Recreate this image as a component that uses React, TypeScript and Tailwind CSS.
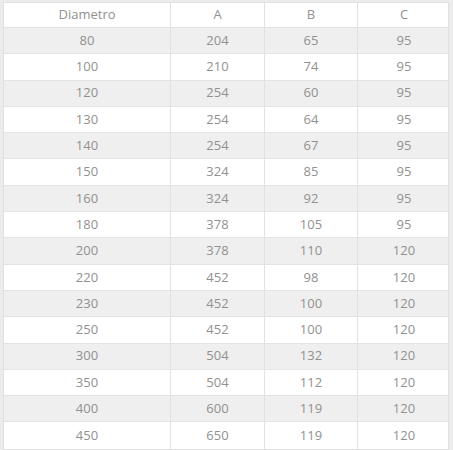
const rows: [string, string, string, string][] = [
  ["80", "204", "65", "95"],
  ["100", "210", "74", "95"],
  ["120", "254", "60", "95"],
  ["130", "254", "64", "95"],
  ["140", "254", "67", "95"],
  ["150", "324", "85", "95"],
  ["160", "324", "92", "95"],
  ["180", "378", "105", "95"],
  ["200", "378", "110", "120"],
  ["220", "452", "98", "120"],
  ["230", "452", "100", "120"],
  ["250", "452", "100", "120"],
  ["300", "504", "132", "120"],
  ["350", "504", "112", "120"],
  ["400", "600", "119", "120"],
  ["450", "650", "119", "120"],
];

const header = ["Diametro", "A", "B", "C"];

function Row({ cells, shaded }: { cells: string[]; shaded: boolean }) {
  return (
    <div
      className={`grid grid-cols-[167px_94px_93px_92px] h-[26.3px] border-b border-[#e4e4e4] last:border-b-0 ${
        shaded ? "bg-[#efefef]" : "bg-white"
      }`}
    >
      {cells.map((c, i) => (
        <div
          key={i}
          className="flex items-center justify-center border-r border-[#e2e2e2] last:border-r-0"
        >
          {c}
        </div>
      ))}
    </div>
  );
}

export default function App() {
  return (
    <div
      className="w-[453px] h-[450px] bg-[#ececec] pl-[3px] pt-[2px] text-[13px] text-[#919191]"
      style={{ fontFamily: '"Open Sans", sans-serif' }}
    >
      <div className="w-[446px] border border-[#e0e0e0] bg-white">
        <div className="grid grid-cols-[167px_94px_93px_92px] h-[25px] border-b border-[#e4e4e4] bg-white">
          {header.map((h, i) => (
            <div
              key={i}
              className="flex items-center justify-center border-r border-[#e2e2e2] last:border-r-0"
            >
              {h}
            </div>
          ))}
        </div>
        {rows.map((r, i) => (
          <Row key={i} cells={r} shaded={i % 2 === 0} />
        ))}
      </div>
    </div>
  );
}
